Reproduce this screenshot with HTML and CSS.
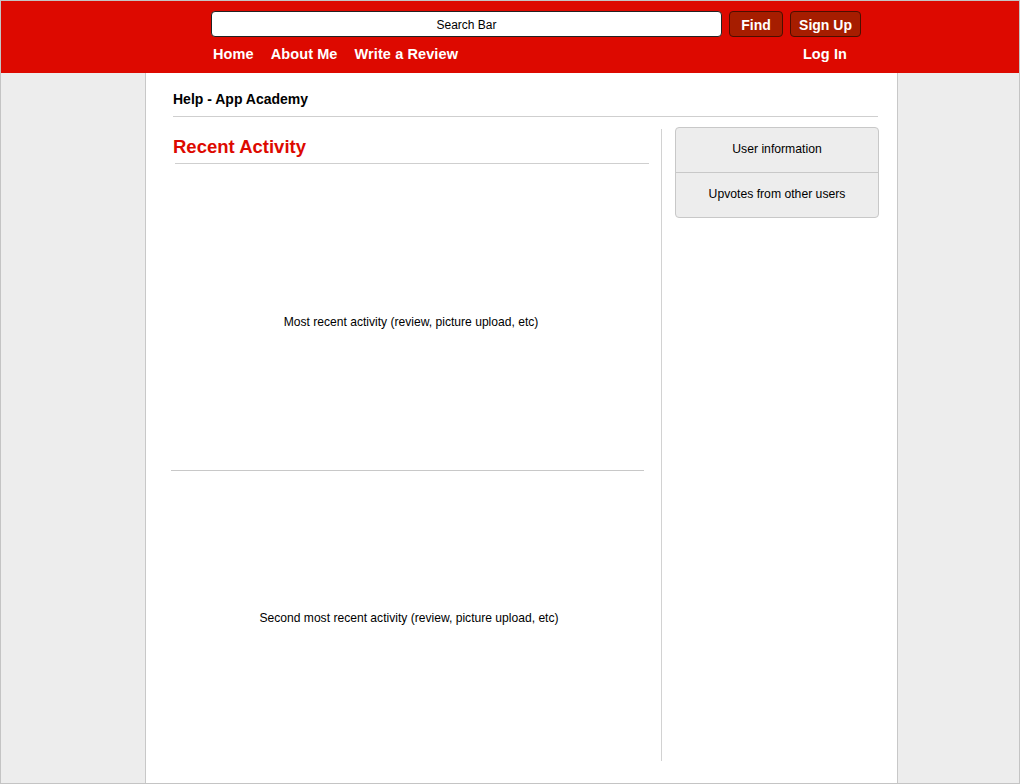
FILE: index.html
```html
<!DOCTYPE html>
<html>
<head>
<meta charset="utf-8">
<link rel="stylesheet" href="styles.css">
</head>
<body>
<div class="frame">
  <header class="header">
    <div class="header-inner">
      <div class="search-row">
        <div class="search">Search Bar</div>
        <div class="btn btn-find">Find</div>
        <div class="btn btn-signup">Sign Up</div>
      </div>
      <nav class="nav">
        <span class="nav-link">Home</span>
        <span class="nav-link">About Me</span>
        <span class="nav-link">Write a Review</span>
        <span class="nav-link nav-login">Log In</span>
      </nav>
    </div>
  </header>
  <main class="main">
    <div class="breadcrumb">Help - App Academy</div>
    <div class="content">
      <section class="activity-col">
        <h2 class="section-title">Recent Activity</h2>
        <div class="title-rule"></div>
        <div class="activity activity-first">Most recent activity (review, picture upload, etc)</div>
        <div class="activity-rule"></div>
        <div class="activity activity-second">Second most recent activity (review, picture upload, etc)</div>
      </section>
      <div class="divider"></div>
      <aside class="panel">
        <div class="panel-row">User information</div>
        <div class="panel-row">Upvotes from other users</div>
      </aside>
    </div>
  </main>
</div>
</body>
</html>
```
FILE: styles.css
```css
* { box-sizing: border-box; }
html, body { margin: 0; padding: 0; }
body {
  font-family: "Liberation Sans", Arial, sans-serif;
  color: #000;
  background: #ededed;
}
.frame {
  width: 1020px;
  height: 784px;
  border: 1px solid #c4c4c4;
  background: #ededed;
  display: flex;
  flex-direction: column;
  overflow: hidden;
}
.header {
  height: 72px;
  flex: 0 0 72px;
  background: #dd0900;
  padding-top: 10px;
}
.header-inner {
  margin-left: 210px;
  width: 650px;
}
.search-row {
  display: flex;
  gap: 7px;
  height: 26px;
}
.search {
  width: 511px;
  height: 26px;
  background: #fff;
  border: 1px solid #222;
  border-radius: 4px;
  font-size: 12px;
  line-height: 24px;
  padding-top: 1px;
  text-align: center;
  color: #000;
}
.btn {
  height: 26px;
  background: #a61d00;
  border: 1px solid #4d0e00;
  border-radius: 4px;
  color: #fff;
  font-weight: bold;
  font-size: 14px;
  line-height: 24px;
  padding-top: 1px;
  text-align: center;
}
.btn-find { width: 54px; }
.btn-signup { width: 71px; }
.nav {
  display: flex;
  gap: 17px;
  margin-top: 8px;
  padding-left: 2px;
  padding-right: 14px;
  line-height: 18px;
}
.nav-link {
  color: #fff;
  font-weight: bold;
  font-size: 14.5px;
  letter-spacing: 0.1px;
}
.nav-login { margin-left: auto; }
.main {
  flex: 1;
  margin-left: 144px;
  width: 753px;
  background: #fff;
  border-left: 1px solid #c8c8c8;
  border-right: 1px solid #c8c8c8;
}
.breadcrumb {
  margin: 0 19px 0 27px;
  padding-top: 17px;
  padding-bottom: 8px;
  font-size: 14px;
  font-weight: bold;
  line-height: 18px;
  border-bottom: 1px solid #cfcfcf;
}
.content {
  display: flex;
  align-items: flex-start;
  padding-left: 27px;
}
.activity-col {
  width: 476px;
}
.section-title {
  margin: 19px 0 0 0;
  font-size: 18.5px;
  line-height: 22px;
  font-weight: bold;
  color: #dd0900;
  padding-bottom: 5px;
}
.title-rule {
  margin-left: 2px;
  height: 1px;
  background: #cfcfcf;
}
.activity {
  display: flex;
  align-items: center;
  justify-content: center;
  font-size: 12.1px;
  color: #000;
}
.activity-first { height: 306px; padding-top: 10px; }
.activity-second { height: 290px; padding-top: 4px; margin-left: -4px; }
.activity-rule {
  margin-left: -2px;
  width: 473px;
  height: 1px;
  background: #c8c8c8;
}
.divider {
  margin: 12px 13px 0 12px;
  width: 1px;
  height: 632px;
  background: #d2d2d2;
}
.panel {
  margin-top: 10px;
  width: 204px;
  background: #ededed;
  border: 1px solid #c8c8c8;
  border-radius: 4px;
}
.panel-row {
  height: 44px;
  font-size: 12.2px;
  line-height: 42px;
  text-align: center;
}
.panel-row + .panel-row {
  height: 45px;
  border-top: 1px solid #c8c8c8;
  line-height: 43px;
}
```
